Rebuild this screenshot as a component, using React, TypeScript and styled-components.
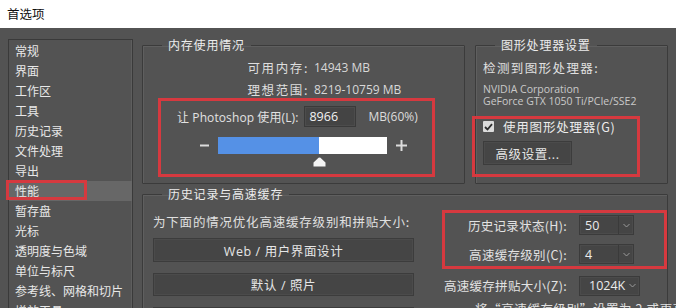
import * as React from 'react';
import styled, { createGlobalStyle } from 'styled-components';

const GlobalStyle = createGlobalStyle`
  html, body {
    margin: 0;
    padding: 0;
    background: #535353;
  }
  body {
    font-family: "Open Sans", "Noto Sans CJK SC", sans-serif;
    color: #e4e4e4;
  }
`;

const Window = styled.div`
  width: 676px;
  height: 308px;
  overflow: hidden;
  background: #535353;
  display: flex;
  flex-direction: column;
`;

const TitleBar = styled.div`
  height: 28px;
  flex: none;
  background: #ffffff;
  color: #111;
  font-family: "Noto Sans CJK SC", sans-serif;
  font-size: 12.5px;
  line-height: 28px;
  padding-left: 7px;
`;

const Body = styled.div`
  display: flex;
  align-items: flex-start;
  padding: 8px 0 0 8px;
`;

const Sidebar = styled.ul`
  list-style: none;
  margin: 3px 0 0 0;
  padding: 1px 0 0 0;
  width: 125px;
  height: 300px;
  box-sizing: border-box;
  border: 1px solid #3a3a3a;
  box-shadow: inset -1px 0 0 #5e5e5e;
  flex: none;
`;

const NavItem = styled.li<{ $active?: boolean }>`
  position: relative;
  height: 20px;
  line-height: 20px;
  padding-left: 6px;
  font-family: "Noto Sans CJK SC", sans-serif;
  font-size: 12px;
  color: #e8e8e8;
  white-space: nowrap;
  background: ${(p) => (p.$active ? '#676767' : 'transparent')};
`;

const Mark = styled.div`
  position: absolute;
  border: 3px solid #d6393f;
  box-sizing: border-box;
  pointer-events: none;
`;

const NavMark = styled(Mark)`
  left: -3px;
  top: -1px;
  width: 81px;
  height: 20px;
`;

const Main = styled.div`
  margin-left: 9px;
  width: 526px;
  display: flex;
  flex-direction: column;
  gap: 1px;
`;

const TopRow = styled.div`
  display: flex;
  gap: 10px;
  align-items: stretch;
`;

const Group = styled.fieldset<{ $w?: number }>`
  margin: 0;
  padding: 0 0 6px 0;
  min-width: 0;
  width: ${(p) => (p.$w ? `${p.$w}px` : 'auto')};
  box-sizing: border-box;
  border: 1px solid #3b3b3b;
  box-shadow: inset 1px 1px 0 #5f5f5f;
  border-radius: 1px;
`;

const Legend = styled.legend`
  margin-left: 19px;
  padding: 0 6px;
  font-family: "Noto Sans CJK SC", sans-serif;
  font-size: 12px;
  letter-spacing: 0.8px;
  line-height: 18px;
  color: #ececec;
`;

const InfoRow = styled.div`
  display: flex;
  align-items: center;
  height: 18px;
  margin-top: 4px;
  gap: 5px;
`;

const InfoLabel = styled.span`
  width: 166px;
  text-align: right;
  font-family: "Noto Sans CJK SC", sans-serif;
  font-size: 12.5px;
  letter-spacing: 1.6px;
  color: #dedede;
`;

const InfoValue = styled.span`
  font-size: 12px;
  color: #d8d8d8;
`;

const MarkBox = styled.div<{ $ml?: number; $w: number; $h: number; $mt?: number }>`
  position: relative;
  margin-left: ${(p) => p.$ml ?? 0}px;
  margin-top: ${(p) => p.$mt ?? 0}px;
  width: ${(p) => p.$w}px;
  height: ${(p) => p.$h}px;
  box-sizing: border-box;
  border: 3px solid #d6393f;
`;

const UseRow = styled.div`
  display: flex;
  align-items: center;
  margin: 5px 0 0 16px;
  height: 21px;
  font-size: 12px;
  color: #e2e2e2;
  white-space: nowrap;
`;

const UseLabel = styled.span`
  font-family: "Open Sans", "Noto Sans CJK SC", sans-serif;
  letter-spacing: 0.1px;
`;

const NumInput = styled.div<{ $w: number }>`
  width: ${(p) => p.$w}px;
  height: 21px;
  box-sizing: border-box;
  margin-left: 6px;
  background: #444444;
  border: 1px solid #3a3a3a;
  box-shadow: inset 0 0 0 1px #4c4c4c;
  color: #f2f2f2;
  font-size: 12.5px;
  line-height: 19px;
  padding-left: 4px;
`;

const Unit = styled.span`
  margin-left: 12px;
  font-size: 12px;
  color: #dcdcdc;
`;

const SliderRow = styled.div`
  display: flex;
  align-items: center;
  margin: 10px 0 0 39px;
  gap: 9px;
`;

const Track = styled.div`
  position: relative;
  width: 169px;
  height: 17px;
  background: #ffffff;
`;

const Fill = styled.div`
  height: 100%;
  background: #5591e6;
`;

const Thumb = styled.svg`
  position: absolute;
  top: 20px;
  width: 13px;
  height: 10px;
`;

const GpuTitle = styled.div`
  margin: 5px 0 0 7px;
  height: 18px;
  line-height: 18px;
  font-family: "Noto Sans CJK SC", sans-serif;
  font-size: 12.5px;
  letter-spacing: 1.4px;
  color: #e0e0e0;
`;

const GpuInfo = styled.div`
  margin: 6px 0 0 7px;
  font-family: "Open Sans", sans-serif;
  font-size: 10.5px;
  line-height: 12px;
  color: #c9c9c9;
  white-space: nowrap;
`;

const CheckRow = styled.label`
  display: flex;
  align-items: center;
  gap: 9px;
  margin: 0 0 0 8px;
  height: 15px;
  font-family: "Noto Sans CJK SC", sans-serif;
  font-size: 12.5px;
  letter-spacing: 0.8px;
  color: #ececec;
  white-space: nowrap;
`;

const CheckBox = styled.span`
  width: 11px;
  height: 11px;
  flex: none;
  background: #dcdcdc;
  border-radius: 1px;
  display: flex;
  align-items: center;
  justify-content: center;
`;

const Button = styled.div<{ $w?: number; $h?: number }>`
  width: ${(p) => (p.$w ? `${p.$w}px` : '100%')};
  height: ${(p) => p.$h ?? 24}px;
  box-sizing: border-box;
  background: #454545;
  border: 1px solid #3c3c3c;
  box-shadow: inset 0 0 0 1px #4b4b4b;
  display: flex;
  align-items: center;
  justify-content: center;
  font-family: "Open Sans", "Noto Sans CJK SC", sans-serif;
  font-size: 12.5px;
  letter-spacing: 0.6px;
  color: #e6e6e6;
  white-space: nowrap;
`;

const AdvButton = styled(Button)`
  margin: 7px 0 0 8px;
`;

const CacheBody = styled.div`
  display: flex;
  align-items: flex-start;
`;

const LeftCol = styled.div`
  width: 264px;
  margin-left: 10px;
  display: flex;
  flex-direction: column;
  gap: 11px;
`;

const Hint = styled.div`
  margin-top: 10px;
  margin-bottom: -4px;
  height: 18px;
  line-height: 18px;
  font-family: "Noto Sans CJK SC", sans-serif;
  font-size: 12.5px;
  letter-spacing: 0.8px;
  color: #e0e0e0;
  white-space: nowrap;
`;

const RightCol = styled.div`
  margin: 7px 0 0 28px;
  width: 225px;
  display: flex;
  flex-direction: column;
  flex: none;
`;

const FieldRow = styled.div<{ $lw: number }>`
  display: flex;
  align-items: center;
  gap: 12px;
  height: 20px;
  > span {
    width: ${(p) => p.$lw}px;
    flex: none;
    text-align: right;
    font-family: "Noto Sans CJK SC", sans-serif;
    font-size: 12.5px;
    letter-spacing: 0.3px;
    color: #e2e2e2;
    white-space: nowrap;
  }
`;

const MarkRows = styled.div`
  width: 225px;
  height: 59px;
  box-sizing: border-box;
  border: 3px solid #d6393f;
  padding-top: 2px;
  display: flex;
  flex-direction: column;
  gap: 9px;
`;

const Select = styled.div<{ $w: number; $split?: boolean }>`
  width: ${(p) => p.$w}px;
  height: 20px;
  box-sizing: border-box;
  background: #454545;
  border: 1px solid #3b3b3b;
  box-shadow: inset 0 0 0 1px #4b4b4b;
  display: flex;
  align-items: center;
  font-size: 12.5px;
  color: #ececec;
  > b {
    font-weight: normal;
    flex: 1;
    padding-left: ${(p) => (p.$split ? 5 : 9)}px;
  }
  > i {
    width: ${(p) => (p.$split ? 14 : 14)}px;
    height: 100%;
    display: flex;
    align-items: center;
    justify-content: center;
    border-left: ${(p) => (p.$split ? '1px solid #3a3a3a' : 'none')};
  }
`;

const Note = styled.div`
  margin: 3px 0 0 33px;
  font-family: "Noto Sans CJK SC", sans-serif;
  font-size: 12.5px;
  letter-spacing: 0.6px;
  color: #e0e0e0;
  white-space: nowrap;
`;

const Chevron = () => (
  <svg width="7" height="5" viewBox="0 0 7 5">
    <path d="M0.5 1 L3.5 4 L6.5 1" fill="none" stroke="#9a9a9a" strokeWidth="1" />
  </svg>
);

const navItems = [
  '常规',
  '界面',
  '工作区',
  '工具',
  '历史记录',
  '文件处理',
  '导出',
  '性能',
  '暂存盘',
  '光标',
  '透明度与色域',
  '单位与标尺',
  '参考线、网格和切片',
  '增效工具',
  '文字',
];

export default function App() {
  const percent = 60;
  return (
    <>
      <GlobalStyle />
      <Window>
        <TitleBar>首选项</TitleBar>
        <Body>
          <Sidebar>
            {navItems.map((item) => (
              <NavItem key={item} $active={item === '性能'}>
                {item}
                {item === '性能' && <NavMark />}
              </NavItem>
            ))}
          </Sidebar>

          <Main>
            <TopRow>
              <Group $w={323}>
                <Legend>内存使用情况</Legend>
                <InfoRow>
                  <InfoLabel>可用内存:</InfoLabel>
                  <InfoValue>14943 MB</InfoValue>
                </InfoRow>
                <InfoRow>
                  <InfoLabel>理想范围:</InfoLabel>
                  <InfoValue>8219-10759 MB</InfoValue>
                </InfoRow>
                <MarkBox $ml={15} $w={277} $h={79}>
                  <UseRow>
                    <UseLabel>让 Photoshop 使用(L):</UseLabel>
                    <NumInput $w={52}>8966</NumInput>
                    <Unit>MB(60%)</Unit>
                  </UseRow>
                  <SliderRow>
                    <svg width="9" height="9" viewBox="0 0 9 9">
                      <rect x="0" y="3.5" width="9" height="2" fill="#dcdcdc" />
                    </svg>
                    <Track>
                      <Fill style={{ width: `${percent}%` }} />
                      <Thumb viewBox="0 0 13 10" style={{ left: `calc(${percent}% - 6px)` }}>
                        <path d="M6.5 0.5 Q7.5 0.5 8.5 1.8 L12.5 5.5 L12.5 9.5 L0.5 9.5 L0.5 5.5 L4.5 1.8 Q5.5 0.5 6.5 0.5 Z" fill="#f4f4f4" />
                      </Thumb>
                    </Track>
                    <svg width="11" height="11" viewBox="0 0 11 11">
                      <rect x="0" y="4.5" width="11" height="2" fill="#dcdcdc" />
                      <rect x="4.5" y="0" width="2" height="11" fill="#dcdcdc" />
                    </svg>
                  </SliderRow>
                </MarkBox>
              </Group>

              <Group $w={193}>
                <Legend>图形处理器设置</Legend>
                <GpuTitle>检测到图形处理器:</GpuTitle>
                <GpuInfo>
                  NVIDIA Corporation
                  <br />
                  GeForce GTX 1050 Ti/PCIe/SSE2
                </GpuInfo>
                <MarkBox $ml={-4} $mt={9} $w={168} $h={61}>
                  <CheckRow>
                    <CheckBox>
                      <svg width="9" height="8" viewBox="0 0 9 8">
                        <path d="M1 4 L3.5 6.5 L8 1.2" fill="none" stroke="#2e2e2e" strokeWidth="1.8" />
                      </svg>
                    </CheckBox>
                    使用图形处理器(G)
                  </CheckRow>
                  <AdvButton $w={89}>高级设置...</AdvButton>
                </MarkBox>
              </Group>
            </TopRow>

            <Group>
              <Legend>历史记录与高速缓存</Legend>
              <CacheBody>
                <LeftCol>
                  <Hint>为下面的情况优化高速缓存级别和拼贴大小:</Hint>
                  <Button>Web / 用户界面设计</Button>
                  <Button $h={23}>默认 / 照片</Button>
                  <Button>超大像素大小</Button>
                </LeftCol>
                <RightCol>
                  <MarkRows>
                    <FieldRow $lw={122}>
                      <span>历史记录状态(H):</span>
                      <Select $w={55} $split>
                        <b>50</b>
                        <i>
                          <Chevron />
                        </i>
                      </Select>
                    </FieldRow>
                    <FieldRow $lw={122}>
                      <span>高速缓存级别(C):</span>
                      <Select $w={55} $split>
                        <b>4</b>
                        <i>
                          <Chevron />
                        </i>
                      </Select>
                    </FieldRow>
                  </MarkRows>
                  <FieldRow $lw={125} style={{ marginTop: 6, height: 21 }}>
                    <span>高速缓存拼贴大小(Z):</span>
                    <Select $w={61}>
                      <b>1024K</b>
                      <i>
                        <Chevron />
                      </i>
                    </Select>
                  </FieldRow>
                  <Note>将“高速缓存级别”设置为 2 或更高</Note>
                </RightCol>
              </CacheBody>
            </Group>
          </Main>
        </Body>
      </Window>
    </>
  );
}
